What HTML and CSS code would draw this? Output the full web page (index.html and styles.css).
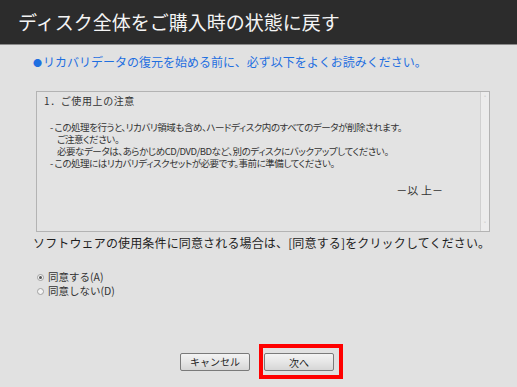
FILE: index.html
```html
<!DOCTYPE html>
<html lang="ja">
<head>
    <meta charset="UTF-8">
    <title>ディスク全体をご購入時の状態に戻す</title>
    <link rel="stylesheet" href="styles.css">
</head>
<body>

<header class="title-bar">
    <h1>ディスク全体をご購入時の状態に戻す</h1>
</header>

<main class="content">
    <p class="notice"><span class="dot">●</span>リカバリデータの復元を始める前に、必ず以下をよくお読みください。</p>

    <div class="terms">
        <div class="terms-text">
            <p class="terms-head">1．ご使用上の注意</p>
            <ul class="terms-list">
                <li>- この処理を行うと、リカバリ領域も含め、ハードディスク内のすべてのデータが削除されます。<br>
                    ご注意ください。<br>
                    必要なデータは、あらかじめCD/DVD/BDなど、別のディスクにバックアップしてください。</li>
                <li>- この処理にはリカバリディスクセットが必要です。事前に準備してください。</li>
            </ul>
            <div class="terms-end"><span>－以 上－</span></div>
        </div>
        <div class="scrollbar">
            <span class="arrow">&#708;</span>
            <span class="arrow">&#709;</span>
        </div>
    </div>

    <p class="agree-note">ソフトウェアの使用条件に同意される場合は、[同意する]をクリックしてください。</p>

    <div class="choices">
        <label class="choice"><span class="radio checked"></span>同意する(A)</label>
        <label class="choice"><span class="radio"></span>同意しない(D)</label>
    </div>

    <div class="actions">
        <button class="btn">キャンセル</button>
        <div class="highlight">
            <button class="btn">次へ</button>
        </div>
    </div>
</main>

</body>
</html>
```

FILE: styles.css
```css
body {
    margin: 0;
    width: 517px;
    height: 387px;
    overflow: hidden;
    font-family: "Noto Sans CJK JP", "Noto Sans", sans-serif;
    background: #e1e1e1;
    color: #222;
}

.title-bar {
    height: 44px;
    background: #2c2c2c;
    border-bottom: 1px solid #8a8a8a;
    display: flex;
    align-items: center;
    padding-left: 18px;
}

.title-bar h1 {
    margin: 0;
    font-size: 19px;
    font-weight: normal;
    color: #f4f4f4;
    line-height: 22px;
}

.content {
    padding-left: 33px;
}

.notice {
    margin: 10px 0 0;
    font-size: 12px;
    line-height: 14px;
    color: #1f6fe0;
}

.notice .dot {
    display: inline-block;
    width: 10px;
    font-size: 9px;
    vertical-align: 1px;
}

.terms {
    margin: 21px 0 0 3px;
    width: 452px;
    height: 139px;
    border: 1px solid #b3b3b3;
    background: #e3e3e3;
    display: flex;
}

.terms-text {
    flex: 1;
    min-width: 0;
    padding: 3px 0 0 7px;
    font-size: 9.5px;
    line-height: 12px;
    color: #333;
}

.terms-head {
    margin: 0 0 14px;
    font-size: 10px;
    letter-spacing: 0.6px;
}

.terms-list {
    list-style: none;
    margin: 0;
    padding: 0 0 0 6px;
    font-feature-settings: "palt";
    letter-spacing: -0.45px;
}

.terms-list li {
    padding-left: 7px;
    text-indent: -7px;
}

.terms-end {
    display: flex;
    justify-content: flex-end;
    margin-top: 16px;
    padding-right: 37px;
    font-family: "Liberation Serif", "Noto Sans CJK JP", serif;
    font-size: 11px;
}

.scrollbar {
    width: 8px;
    flex-shrink: 0;
    border-left: 1px solid #d0d0d0;
    background: #ececec;
    display: flex;
    flex-direction: column;
    justify-content: space-between;
    align-items: center;
    padding: 3px 0;
}

.scrollbar .arrow {
    font-size: 7px;
    line-height: 7px;
    color: #a8a8a8;
}

.agree-note {
    margin: 4px 0 0;
    font-size: 12px;
    line-height: 14px;
    letter-spacing: 0.15px;
    color: #1e1e1e;
}

.choices {
    margin: 20px 0 0 4px;
    display: flex;
    flex-direction: column;
}

.choice {
    height: 14px;
    display: flex;
    align-items: center;
    gap: 4px;
    font-size: 10.5px;
    line-height: 14px;
    color: #333;
}

.radio {
    width: 5px;
    height: 5px;
    border: 1px solid #a0a0a0;
    border-radius: 50%;
    background: #f4f4f4;
    position: relative;
}

.radio.checked::after {
    content: "";
    position: absolute;
    left: 1px;
    top: 1px;
    width: 3px;
    height: 3px;
    border-radius: 50%;
    background: #555;
}

.actions {
    margin: 46px 0 0 147px;
    display: flex;
    align-items: center;
    gap: 9px;
}

.btn {
    width: 70px;
    height: 18px;
    padding: 0;
    border: 1px solid #7a7a7a;
    border-radius: 2px;
    background: linear-gradient(#f3f3f3, #e6e6e6 50%, #d6d6d6);
    font-family: "Noto Sans CJK JP", sans-serif;
    font-size: 10px;
    color: #222;
}

.highlight {
    display: flex;
    border: 4px solid #ff0000;
    padding: 5px 5px 4px 1px;
}
```
